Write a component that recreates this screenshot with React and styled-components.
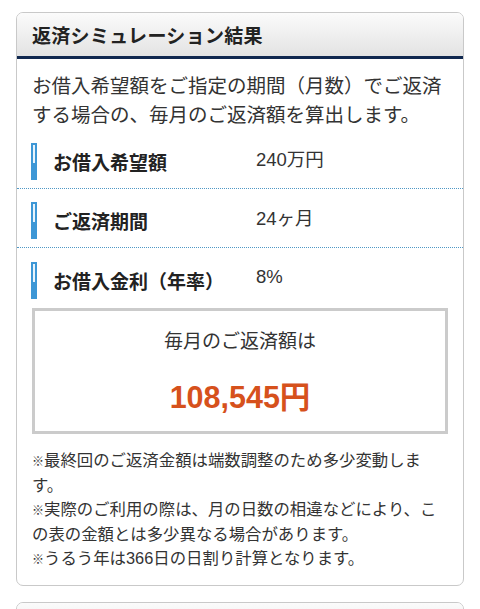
import React from 'react';
import styled, { createGlobalStyle } from 'styled-components';

const GlobalStyle = createGlobalStyle`
  body {
    margin: 0;
    background: #fff;
    color: #333;
    font-family: "Liberation Sans", "Noto Sans CJK JP", sans-serif;
  }
`;

const Page = styled.div`
  display: flex;
  flex-direction: column;
  gap: 16px;
  padding: 12px 16px 0;
`;

const Card = styled.section`
  border: 1px solid #c9c9c9;
  border-radius: 7px;
  overflow: hidden;
  background: #fff;
`;

const CardHeader = styled.header`
  height: 43px;
  display: flex;
  align-items: center;
  padding: 0 15px;
  background: linear-gradient(to bottom, #fbfbfb 0%, #e3e3e3 100%);
  border-bottom: ${(p) => (p.$line ? '3px solid #10284f' : 'none')};
`;

const Title = styled.h2`
  margin: 0;
  font-size: 19px;
  font-weight: bold;
  color: #222;
  letter-spacing: 0.3px;
`;

const Intro = styled.p`
  margin: 0;
  padding: 13px 15px 0;
  font-size: 19.5px;
  line-height: 29px;
  color: #333;
`;

const Row = styled.div`
  display: flex;
  align-items: center;
  height: ${(p) => (p.$last ? '60px' : '58px')};
  padding: 0 14px;
  border-bottom: ${(p) => (p.$last ? 'none' : '1px dotted #4f98c6')};
`;

// blue tab marker in front of each label, light slot at the top
const Marker = styled.span`
  position: relative;
  flex: none;
  width: 6px;
  height: 37px;
  margin-top: 4px;
  background: #3d97d6;

  &::after {
    content: '';
    position: absolute;
    left: 2px;
    top: 2px;
    width: 2px;
    height: 18px;
    background: #e8f4fc;
  }
`;

const Label = styled.span`
  width: 203px;
  margin-left: 16px;
  font-size: 19px;
  font-weight: bold;
  color: #222;
  padding-top: 4px;
`;

const Value = styled.span`
  font-size: 18.5px;
  color: #333;
  margin-top: -2px;
`;

const ResultBox = styled.div`
  margin: 0 15px;
  border: 3px solid #cbcbcb;
  height: 120px;
  display: flex;
  flex-direction: column;
  align-items: center;
  justify-content: center;
  gap: 20px;
`;

const ResultLabel = styled.div`
  font-size: 19px;
  color: #333;
`;

const Amount = styled.div`
  font-size: 30.5px;
  font-weight: bold;
  color: #d6511c;
`;

const Notes = styled.div`
  padding: 14px 15px 14px;
  font-size: 16.4px;
  line-height: 24.5px;
  color: #333;
`;

const Note = styled.p`
  margin: 0;
`;

const Mark = styled.span`
  font-size: 12px;
  line-height: 1;
`;

const rows = [
  { label: 'お借入希望額', value: '240万円' },
  { label: 'ご返済期間', value: '24ヶ月' },
  { label: 'お借入金利（年率）', value: '8%' },
];

const notes = [
  '最終回のご返済金額は端数調整のため多少変動します。',
  '実際のご利用の際は、月の日数の相違などにより、この表の金額とは多少異なる場合があります。',
  'うるう年は366日の日割り計算となります。',
];

export default function App() {
  return (
    <>
      <GlobalStyle />
      <Page>
        <Card>
          <CardHeader $line>
            <Title>返済シミュレーション結果</Title>
          </CardHeader>
          <Intro>
            お借入希望額をご指定の期間（月数）でご返済する場合の、毎月のご返済額を算出します。
          </Intro>
          {rows.map((r, i) => (
            <Row key={r.label} $last={i === rows.length - 1}>
              <Marker />
              <Label>{r.label}</Label>
              <Value>{r.value}</Value>
            </Row>
          ))}
          <ResultBox>
            <ResultLabel>毎月のご返済額は</ResultLabel>
            <Amount>108,545円</Amount>
          </ResultBox>
          <Notes>
            {notes.map((n) => (
              <Note key={n}>
                <Mark>※</Mark>
                {n}
              </Note>
            ))}
          </Notes>
        </Card>
        <Card>
          <CardHeader />
        </Card>
      </Page>
    </>
  );
}
